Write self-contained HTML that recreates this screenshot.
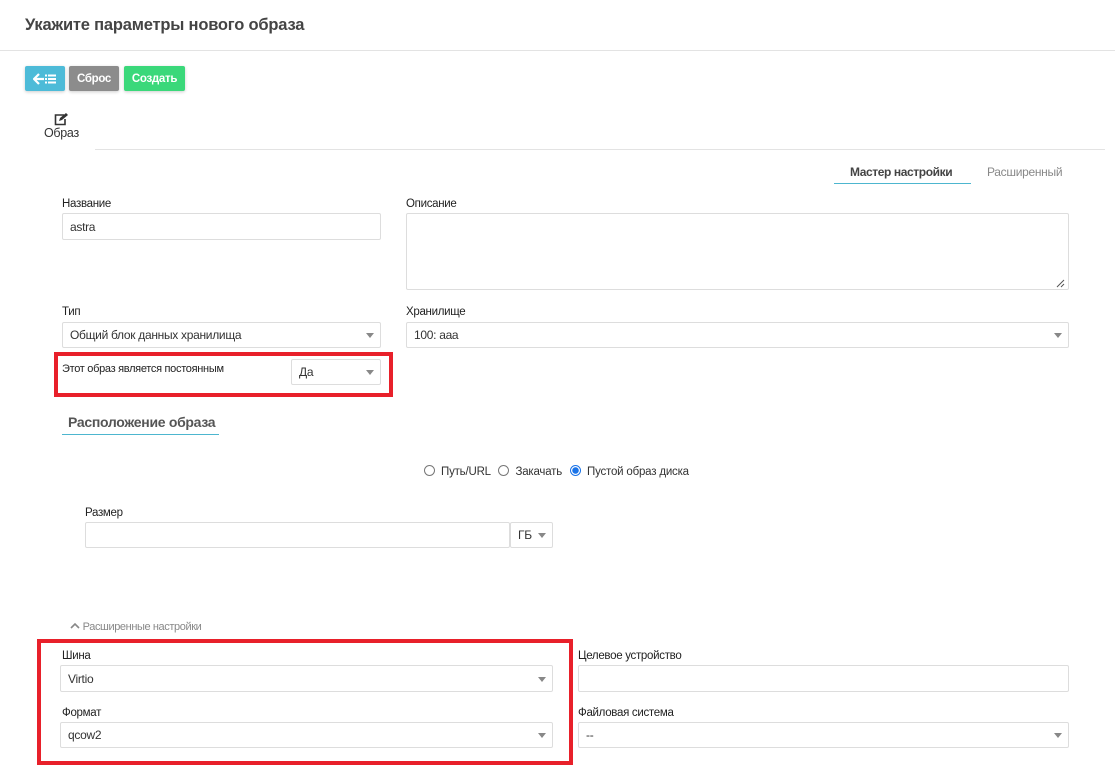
<!DOCTYPE html>
<html><head><meta charset="utf-8"><style>
*{box-sizing:border-box;margin:0;padding:0}
body{width:1115px;height:767px;background:#fff;font-family:"Liberation Sans",sans-serif;color:#333;position:relative;overflow:hidden;font-size:12px}
.a{position:absolute}
.lbl{position:absolute;font-size:11.5px;color:#222;letter-spacing:-0.3px}
.inp{position:absolute;border:1px solid #ddd;border-radius:2px;background:#fff;font-size:12px;color:#333;padding-left:7px;display:flex;align-items:center;letter-spacing:-0.3px}
.sel::after{content:"";position:absolute;right:6px;top:50%;margin-top:-2px;border-left:4px solid transparent;border-right:4px solid transparent;border-top:5px solid #888}
.btn{position:absolute;top:66px;height:25px;border-radius:2px;color:#fff;font-weight:bold;font-size:11.5px;letter-spacing:-0.3px;display:flex;align-items:center;justify-content:center;box-shadow:0 1px 3px rgba(0,0,0,.2)}
.red{position:absolute;border:4px solid #e8202a}
.radio{display:inline-block;width:11px;height:11px;border:1px solid #777;border-radius:50%;vertical-align:-1px;margin-right:6px;background:#fff}
</style></head><body>
<div class="a" style="left:25px;top:16px;font-size:16.5px;font-weight:bold;color:#444;letter-spacing:-0.2px">Укажите параметры нового образа</div>
<div class="a" style="left:0;top:50px;width:1115px;height:1px;background:#e3e3e3"></div>
<div class="btn" style="left:25px;width:40px;background:#4dbbd8">
<svg width="24" height="12" viewBox="0 0 24 12"><path d="M6 1L1 6l5 5M1 6h10" stroke="#fff" stroke-width="2.2" fill="none"/><rect x="12" y="1.5" width="2" height="2" fill="#fff"/><rect x="12" y="5" width="2" height="2" fill="#fff"/><rect x="12" y="8.5" width="2" height="2" fill="#fff"/><rect x="15" y="1.5" width="8" height="2" fill="#fff"/><rect x="15" y="5" width="8" height="2" fill="#fff"/><rect x="15" y="8.5" width="8" height="2" fill="#fff"/></svg></div>
<div class="btn" style="left:69px;width:50px;background:#8c8c8c">Сброс</div>
<div class="btn" style="left:124px;width:61px;background:#3ad87a">Создать</div>
<svg class="a" style="left:54px;top:113px" width="14" height="13" viewBox="0 0 14 13"><path d="M10 2H1.5v9.5H11V6" stroke="#333" stroke-width="1.6" fill="none"/><path d="M5 8l1-3 6-5 2 2-6 5z" fill="#333"/></svg>
<div class="a" style="left:44px;top:126px;font-size:12.5px;color:#333;letter-spacing:-0.3px">Образ</div>
<div class="a" style="left:95px;top:149px;width:1010px;height:1px;background:#e3e3e3"></div>
<div class="a" style="left:850px;top:165px;font-size:12px;font-weight:bold;color:#444;letter-spacing:-0.4px">Мастер настройки</div>
<div class="a" style="left:834px;top:183px;width:137px;height:1px;background:#4db6cf"></div>
<div class="a" style="left:987px;top:165px;font-size:12px;color:#888;letter-spacing:-0.3px">Расширенный</div>

<div class="lbl" style="left:62px;top:198px">Название</div>
<div class="inp" style="left:62px;top:213px;width:319px;height:27px">astra</div>
<div class="lbl" style="left:406px;top:198px">Описание</div>
<div class="inp" style="left:406px;top:213px;width:663px;height:77px"></div>
<svg class="a" style="left:1056px;top:279px" width="9" height="9"><path d="M1 8L8 1M5 8L8 5" stroke="#555"/></svg>

<div class="lbl" style="left:62px;top:306px">Тип</div>
<div class="inp sel" style="left:62px;top:322px;width:319px;height:26px">Общий блок данных хранилища</div>
<div class="lbl" style="left:406px;top:306px">Хранилище</div>
<div class="inp sel" style="left:406px;top:322px;width:663px;height:26px">100: aaa</div>

<div class="red" style="left:54px;top:352px;width:339px;height:45px"></div>
<div class="lbl" style="left:62px;top:363px;font-size:11px">Этот образ является постоянным</div>
<div class="inp sel" style="left:291px;top:359px;width:90px;height:26px">Да</div>

<div class="a" style="left:68px;top:414px;font-size:14px;font-weight:bold;color:#555;letter-spacing:-0.3px">Расположение образа</div>
<div class="a" style="left:62px;top:434px;width:157px;height:1px;background:#4db6cf"></div>

<div class="a" style="left:424px;top:465px;font-size:11.5px;color:#333;letter-spacing:-0.2px"><span class="radio"></span>Путь/URL &nbsp;<span class="radio" style="margin-left:2px"></span>Закачать &nbsp;<span class="radio" style="margin-left:2px;border-color:#1a73e8;background:radial-gradient(circle,#1a73e8 3px,#fff 3.5px)"></span>Пустой образ диска</div>

<div class="lbl" style="left:85px;top:507px">Размер</div>
<div class="inp" style="left:85px;top:522px;width:425px;height:26px"></div>
<div class="inp sel" style="left:510px;top:522px;width:43px;height:26px">ГБ</div>

<div class="a" style="left:70px;top:621px;font-size:11px;color:#888;letter-spacing:-0.4px"><svg width="10" height="8" style="vertical-align:0"><path d="M1 6l4-4 4 4" stroke="#888" stroke-width="1.6" fill="none"/></svg> Расширенные настройки</div>

<div class="red" style="left:37px;top:639px;width:536px;height:126px"></div>
<div class="lbl" style="left:62px;top:650px">Шина</div>
<div class="inp sel" style="left:60px;top:665px;width:493px;height:27px">Virtio</div>
<div class="lbl" style="left:62px;top:707px">Формат</div>
<div class="inp sel" style="left:60px;top:722px;width:493px;height:26px">qcow2</div>
<div class="lbl" style="left:578px;top:650px">Целевое устройство</div>
<div class="inp" style="left:578px;top:665px;width:491px;height:27px"></div>
<div class="lbl" style="left:578px;top:707px">Файловая система</div>
<div class="inp sel" style="left:578px;top:722px;width:491px;height:26px">--</div>
</body></html>
